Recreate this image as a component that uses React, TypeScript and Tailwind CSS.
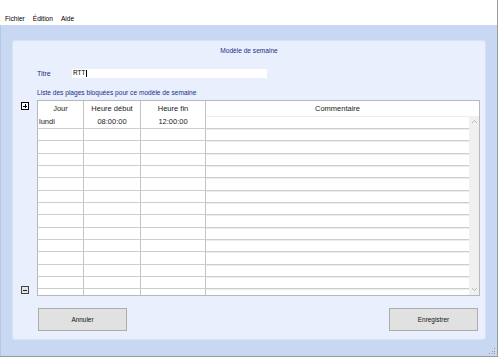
import { useState } from "react"

const font = { fontFamily: '"Liberation Sans", Arial, sans-serif' }

function ArrowUp() {
  return (
    <svg width="7" height="5" viewBox="0 0 7 5">
      <polyline points="1,4 3.5,1.5 6,4" fill="none" stroke="#b8b8b8" strokeWidth="1" />
    </svg>
  )
}

function ArrowDown() {
  return (
    <svg width="7" height="5" viewBox="0 0 7 5">
      <polyline points="1,1 3.5,3.5 6,1" fill="none" stroke="#b8b8b8" strokeWidth="1" />
    </svg>
  )
}

function Row({ h, jour, debut, fin }: { h: string; jour?: string; debut?: string; fin?: string }) {
  return (
    <div className={`flex ${h} shrink-0 border-b border-[#cdcdcd] text-[7.5px] text-[#222] leading-none`}>
      <div className="w-[46px] border-r border-[#c4c4c4] pl-[1px] flex items-center">{jour}</div>
      <div className="w-[57px] border-r border-[#c4c4c4] flex items-center justify-center">{debut}</div>
      <div className="w-[65px] border-r border-[#c4c4c4] flex items-center justify-center">{fin}</div>
      <div className="w-[263px] border-t border-[#ededed]" />
    </div>
  )
}

export default function App() {
  const [titre] = useState("RTT")
  const empty = Array.from({ length: 14 }, (_, i) => i)

  return (
    <div className="w-[498px] h-[357px] flex flex-col border-r border-b border-[#9a9a9a] bg-white" style={font}>
      {/* menu */}
      <div className="h-[25px] shrink-0 bg-white flex items-end pb-[2px] pl-[5px] gap-[8px] text-[6.6px] text-black leading-[8px]">
        <span>Fichier</span>
        <span>Édition</span>
        <span>Aide</span>
      </div>

      {/* zone principale */}
      <div className="relative flex-1 bg-[#c8d8f2] border-l border-[#b6c7e3] pt-[15px] pl-[11px] pr-[11px] pb-[16px]">
        <div className="h-[300px] rounded-[3px] bg-[#e9effc] border border-[#d6e2f7] flex flex-col pt-[5px] pb-[8px]">
          <div className="h-[10px] leading-[10px] text-center text-[6.6px] text-[#20308a]">Modèle de semaine</div>

          <div className="mt-[13px] h-[9px] flex items-center pl-[24px]">
            <span className="w-[35px] shrink-0 text-[7px] text-[#20308a] leading-none">Titre</span>
            <div className="w-[195px] h-[9px] bg-white flex items-center text-[6.4px] text-black leading-none">
              <span className="pl-[1px]">{titre}</span>
              <span className="ml-[1px] w-px h-[7px] bg-black" />
            </div>
          </div>

          <div className="mt-[11px] h-[8px] leading-[8px] pl-[24px] text-[6.6px] text-[#20308a]">
            Liste des plages bloquées pour ce modèle de semaine
          </div>

          <div className="mt-[3px] flex h-[196px]">
            <div className="w-[24px] shrink-0 flex flex-col justify-between items-start pl-[8px] pt-[2px] pb-[2px]">
              <div className="w-[8px] h-[8px] border border-black bg-white relative">
                <div className="absolute left-[1px] top-[2.5px] w-[4px] h-px bg-black" />
                <div className="absolute left-[2.5px] top-[1px] w-px h-[4px] bg-black" />
              </div>
              <div className="w-[8px] h-[8px] border border-[#444] bg-[#e4e4e4] relative">
                <div className="absolute left-[1px] top-[2.5px] w-[4px] h-px bg-[#222]" />
              </div>
            </div>

            <div className="w-[443px] h-[196px] border border-[#b8b8b8] bg-white flex flex-col overflow-hidden">
              <div className="h-[15px] shrink-0 flex text-[7.5px] text-[#222] leading-none">
                <div className="w-[46px] border-r border-[#c4c4c4] flex items-center justify-center">Jour</div>
                <div className="w-[57px] border-r border-[#c4c4c4] flex items-center justify-center">Heure début</div>
                <div className="w-[65px] border-r border-[#c4c4c4] flex items-center justify-center">Heure fin</div>
                <div className="w-[263px] flex items-center justify-center">Commentaire</div>
              </div>
              <div className="flex flex-1 min-h-0">
                <div className="w-[431px] flex flex-col overflow-hidden">
                  <Row h="h-[13px]" jour="lundi" debut="08:00:00" fin="12:00:00" />
                  {empty.map((i) => (
                    <Row key={i} h={i % 3 === 1 ? "h-[13px]" : "h-[12px]"} />
                  ))}
                </div>
                <div className="w-[10px] bg-[#f0f0f0] flex flex-col items-center justify-between pt-[3px] pb-[3px]">
                  <ArrowUp />
                  <ArrowDown />
                </div>
              </div>
            </div>
          </div>

          <div className="mt-[12px] flex justify-between pl-[25px] pr-[7px]">
            <button className="w-[89px] h-[23px] bg-[#e1e1e1] border border-[#adadad] text-[6.4px] text-[#111]">Annuler</button>
            <button className="w-[89px] h-[23px] bg-[#e1e1e1] border border-[#adadad] text-[6.4px] text-[#111]">Enregistrer</button>
          </div>
        </div>

        {/* poignée de redimensionnement */}
        <div className="absolute right-[1px] bottom-[1px] w-[7px] h-[7px] grid grid-cols-3 gap-px">
          <span />
          <span />
          <span className="w-px h-px bg-[#999]" />
          <span />
          <span className="w-px h-px bg-[#999]" />
          <span className="w-px h-px bg-[#999]" />
          <span className="w-px h-px bg-[#999]" />
          <span className="w-px h-px bg-[#999]" />
          <span className="w-px h-px bg-[#999]" />
        </div>
      </div>
    </div>
  )
}
